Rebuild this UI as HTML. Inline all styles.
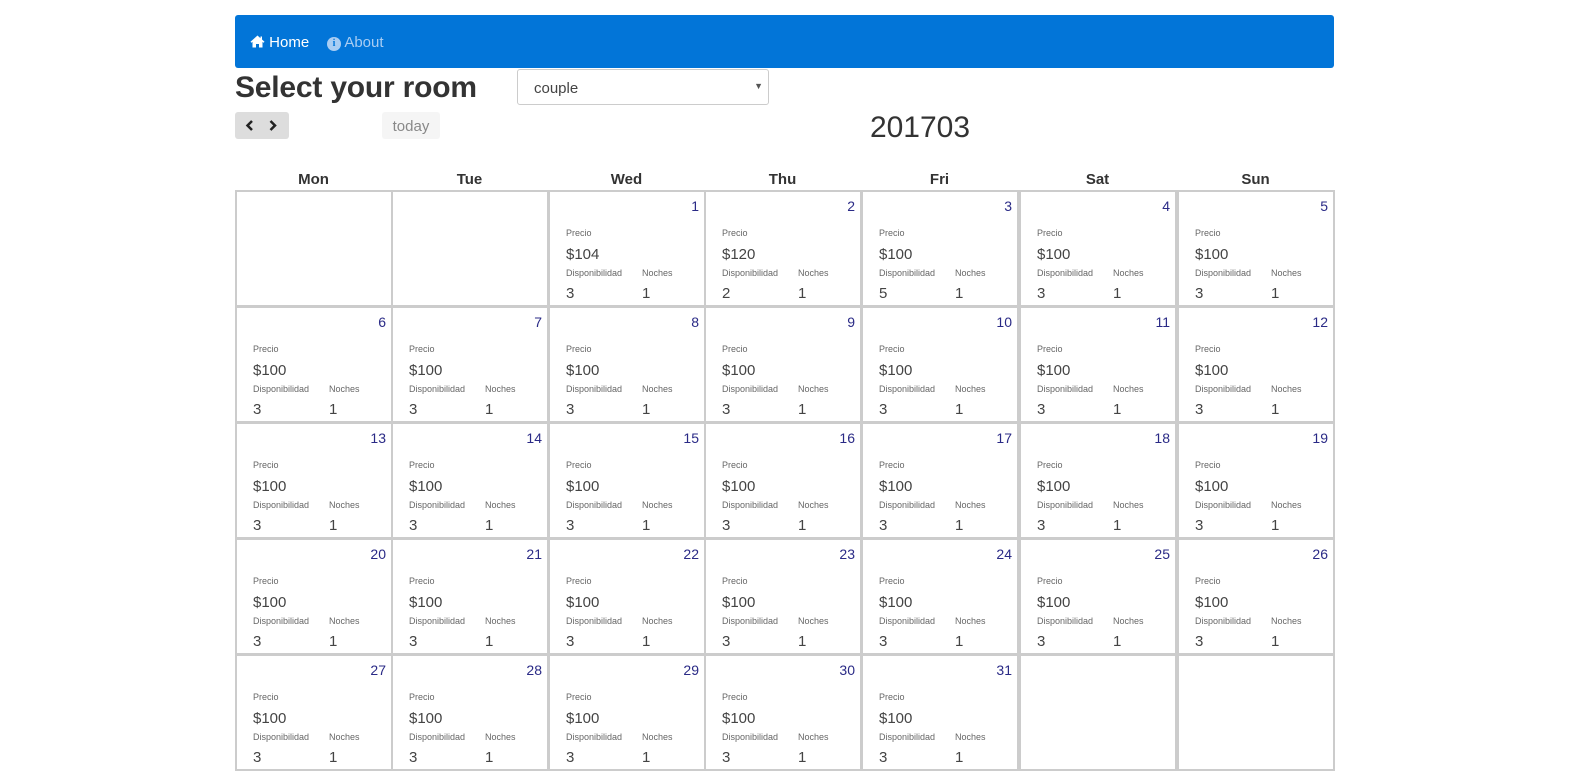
<!DOCTYPE html>
<html><head><meta charset="utf-8"><style>
html,body{margin:0;padding:0;width:1583px;height:753px;overflow:hidden;background:#fff;font-family:"Liberation Sans",sans-serif;color:#333}
.nav{position:absolute;left:235px;top:15px;width:1099px;height:53px;background:#0275d8;border-radius:3px}
.nav span{position:absolute;top:19px;font-size:15px}
h1{position:absolute;left:235px;top:71px;margin:0;font-size:30px;font-weight:bold;letter-spacing:-0.2px;color:#333}
.sel{position:absolute;left:517px;top:69px;width:252px;height:36px;border:1px solid #ccc;border-radius:3px;box-sizing:border-box}
.sel span{position:absolute;left:16px;top:10px;font-size:15px;color:#444}
.sel i{position:absolute;right:5px;top:11px;font-size:9px;font-style:normal;color:#555}
.btn{position:absolute;top:112px;height:27px;border-radius:3px}
.title{position:absolute;left:820px;width:200px;text-align:center;top:111px;font-size:30px;color:#333}
.dh{position:absolute;top:171px;width:157px;text-align:center;font-weight:bold;font-size:15px}
.c{position:absolute;width:158px;height:117px;border:2px solid #ccc;box-sizing:border-box;margin-left:-1px;margin-top:-1px}
.c .n{position:absolute;right:5px;top:6px;font-size:14px;color:#2a2a86}
.c .p{position:absolute;left:16px;top:36px;font-size:9px;color:#666}
.c .v{position:absolute;left:16px;top:54px;font-size:15px;color:#444}
.c .d{position:absolute;left:16px;top:76px;font-size:9px;color:#666}
.c .d2{position:absolute;left:92px;top:76px;font-size:9px;color:#666}
.c .a{position:absolute;left:16px;top:93px;font-size:15px;color:#444}
.c .b{position:absolute;left:92px;top:93px;font-size:15px;color:#444}
</style></head><body>
<div class="nav">
<span style="left:15px;color:#fff"><svg width="15" height="13" viewBox="0 0 15 13" style="vertical-align:-1px"><path d="M7.5 0.5L0.5 6.8 1.4 7.8 2.5 6.9V12.5H6V9H9V12.5H12.5V6.9L13.6 7.8 14.5 6.8 12 4.5V1.5H10.5V3.2Z" fill="#fff"/></svg> Home</span>
<span style="left:92px;color:#a9cdf3"><b style="display:inline-block;width:14px;height:14px;border-radius:50%;background:#a9cdf3;color:#0275d8;font-size:10px;text-align:center;line-height:14px;vertical-align:1px;font-family:'Liberation Serif',serif">i</b> About</span>
</div>
<h1>Select your room</h1>
<div class="sel"><span>couple</span><i>▼</i></div>
<div class="btn" style="left:235px;width:54px;background:#ddd">
<svg width="54" height="27" viewBox="0 0 54 27"><path d="M17 9L12.5 13.5 17 18M35.5 9L40 13.5 35.5 18" fill="none" stroke="#222" stroke-width="2.5"/></svg></div>
<div class="btn" style="left:382px;width:58px;background:#f5f5f5;color:#888;font-size:15px;line-height:29px;text-align:center">today</div>
<div class="title">201703</div>
<div class="dh" style="left:235px">Mon</div><div class="dh" style="left:391px">Tue</div><div class="dh" style="left:548px">Wed</div><div class="dh" style="left:704px">Thu</div><div class="dh" style="left:861px">Fri</div><div class="dh" style="left:1019px">Sat</div><div class="dh" style="left:1177px">Sun</div>

<div class="c" style="left:236px;top:191px"></div>
<div class="c" style="left:392px;top:191px"></div>
<div class="c" style="left:549px;top:191px"><span class="n">1</span><span class="p">Precio</span><span class="v">$104</span><span class="d">Disponibilidad</span><span class="d2">Noches</span><span class="a">3</span><span class="b">1</span></div>
<div class="c" style="left:705px;top:191px"><span class="n">2</span><span class="p">Precio</span><span class="v">$120</span><span class="d">Disponibilidad</span><span class="d2">Noches</span><span class="a">2</span><span class="b">1</span></div>
<div class="c" style="left:862px;top:191px"><span class="n">3</span><span class="p">Precio</span><span class="v">$100</span><span class="d">Disponibilidad</span><span class="d2">Noches</span><span class="a">5</span><span class="b">1</span></div>
<div class="c" style="left:1020px;top:191px"><span class="n">4</span><span class="p">Precio</span><span class="v">$100</span><span class="d">Disponibilidad</span><span class="d2">Noches</span><span class="a">3</span><span class="b">1</span></div>
<div class="c" style="left:1178px;top:191px"><span class="n">5</span><span class="p">Precio</span><span class="v">$100</span><span class="d">Disponibilidad</span><span class="d2">Noches</span><span class="a">3</span><span class="b">1</span></div>

<div class="c" style="left:236px;top:307px"><span class="n">6</span><span class="p">Precio</span><span class="v">$100</span><span class="d">Disponibilidad</span><span class="d2">Noches</span><span class="a">3</span><span class="b">1</span></div>
<div class="c" style="left:392px;top:307px"><span class="n">7</span><span class="p">Precio</span><span class="v">$100</span><span class="d">Disponibilidad</span><span class="d2">Noches</span><span class="a">3</span><span class="b">1</span></div>
<div class="c" style="left:549px;top:307px"><span class="n">8</span><span class="p">Precio</span><span class="v">$100</span><span class="d">Disponibilidad</span><span class="d2">Noches</span><span class="a">3</span><span class="b">1</span></div>
<div class="c" style="left:705px;top:307px"><span class="n">9</span><span class="p">Precio</span><span class="v">$100</span><span class="d">Disponibilidad</span><span class="d2">Noches</span><span class="a">3</span><span class="b">1</span></div>
<div class="c" style="left:862px;top:307px"><span class="n">10</span><span class="p">Precio</span><span class="v">$100</span><span class="d">Disponibilidad</span><span class="d2">Noches</span><span class="a">3</span><span class="b">1</span></div>
<div class="c" style="left:1020px;top:307px"><span class="n">11</span><span class="p">Precio</span><span class="v">$100</span><span class="d">Disponibilidad</span><span class="d2">Noches</span><span class="a">3</span><span class="b">1</span></div>
<div class="c" style="left:1178px;top:307px"><span class="n">12</span><span class="p">Precio</span><span class="v">$100</span><span class="d">Disponibilidad</span><span class="d2">Noches</span><span class="a">3</span><span class="b">1</span></div>

<div class="c" style="left:236px;top:423px"><span class="n">13</span><span class="p">Precio</span><span class="v">$100</span><span class="d">Disponibilidad</span><span class="d2">Noches</span><span class="a">3</span><span class="b">1</span></div>
<div class="c" style="left:392px;top:423px"><span class="n">14</span><span class="p">Precio</span><span class="v">$100</span><span class="d">Disponibilidad</span><span class="d2">Noches</span><span class="a">3</span><span class="b">1</span></div>
<div class="c" style="left:549px;top:423px"><span class="n">15</span><span class="p">Precio</span><span class="v">$100</span><span class="d">Disponibilidad</span><span class="d2">Noches</span><span class="a">3</span><span class="b">1</span></div>
<div class="c" style="left:705px;top:423px"><span class="n">16</span><span class="p">Precio</span><span class="v">$100</span><span class="d">Disponibilidad</span><span class="d2">Noches</span><span class="a">3</span><span class="b">1</span></div>
<div class="c" style="left:862px;top:423px"><span class="n">17</span><span class="p">Precio</span><span class="v">$100</span><span class="d">Disponibilidad</span><span class="d2">Noches</span><span class="a">3</span><span class="b">1</span></div>
<div class="c" style="left:1020px;top:423px"><span class="n">18</span><span class="p">Precio</span><span class="v">$100</span><span class="d">Disponibilidad</span><span class="d2">Noches</span><span class="a">3</span><span class="b">1</span></div>
<div class="c" style="left:1178px;top:423px"><span class="n">19</span><span class="p">Precio</span><span class="v">$100</span><span class="d">Disponibilidad</span><span class="d2">Noches</span><span class="a">3</span><span class="b">1</span></div>

<div class="c" style="left:236px;top:539px"><span class="n">20</span><span class="p">Precio</span><span class="v">$100</span><span class="d">Disponibilidad</span><span class="d2">Noches</span><span class="a">3</span><span class="b">1</span></div>
<div class="c" style="left:392px;top:539px"><span class="n">21</span><span class="p">Precio</span><span class="v">$100</span><span class="d">Disponibilidad</span><span class="d2">Noches</span><span class="a">3</span><span class="b">1</span></div>
<div class="c" style="left:549px;top:539px"><span class="n">22</span><span class="p">Precio</span><span class="v">$100</span><span class="d">Disponibilidad</span><span class="d2">Noches</span><span class="a">3</span><span class="b">1</span></div>
<div class="c" style="left:705px;top:539px"><span class="n">23</span><span class="p">Precio</span><span class="v">$100</span><span class="d">Disponibilidad</span><span class="d2">Noches</span><span class="a">3</span><span class="b">1</span></div>
<div class="c" style="left:862px;top:539px"><span class="n">24</span><span class="p">Precio</span><span class="v">$100</span><span class="d">Disponibilidad</span><span class="d2">Noches</span><span class="a">3</span><span class="b">1</span></div>
<div class="c" style="left:1020px;top:539px"><span class="n">25</span><span class="p">Precio</span><span class="v">$100</span><span class="d">Disponibilidad</span><span class="d2">Noches</span><span class="a">3</span><span class="b">1</span></div>
<div class="c" style="left:1178px;top:539px"><span class="n">26</span><span class="p">Precio</span><span class="v">$100</span><span class="d">Disponibilidad</span><span class="d2">Noches</span><span class="a">3</span><span class="b">1</span></div>

<div class="c" style="left:236px;top:655px"><span class="n">27</span><span class="p">Precio</span><span class="v">$100</span><span class="d">Disponibilidad</span><span class="d2">Noches</span><span class="a">3</span><span class="b">1</span></div>
<div class="c" style="left:392px;top:655px"><span class="n">28</span><span class="p">Precio</span><span class="v">$100</span><span class="d">Disponibilidad</span><span class="d2">Noches</span><span class="a">3</span><span class="b">1</span></div>
<div class="c" style="left:549px;top:655px"><span class="n">29</span><span class="p">Precio</span><span class="v">$100</span><span class="d">Disponibilidad</span><span class="d2">Noches</span><span class="a">3</span><span class="b">1</span></div>
<div class="c" style="left:705px;top:655px"><span class="n">30</span><span class="p">Precio</span><span class="v">$100</span><span class="d">Disponibilidad</span><span class="d2">Noches</span><span class="a">3</span><span class="b">1</span></div>
<div class="c" style="left:862px;top:655px"><span class="n">31</span><span class="p">Precio</span><span class="v">$100</span><span class="d">Disponibilidad</span><span class="d2">Noches</span><span class="a">3</span><span class="b">1</span></div>
<div class="c" style="left:1020px;top:655px"></div>
<div class="c" style="left:1178px;top:655px"></div>
</body></html>
